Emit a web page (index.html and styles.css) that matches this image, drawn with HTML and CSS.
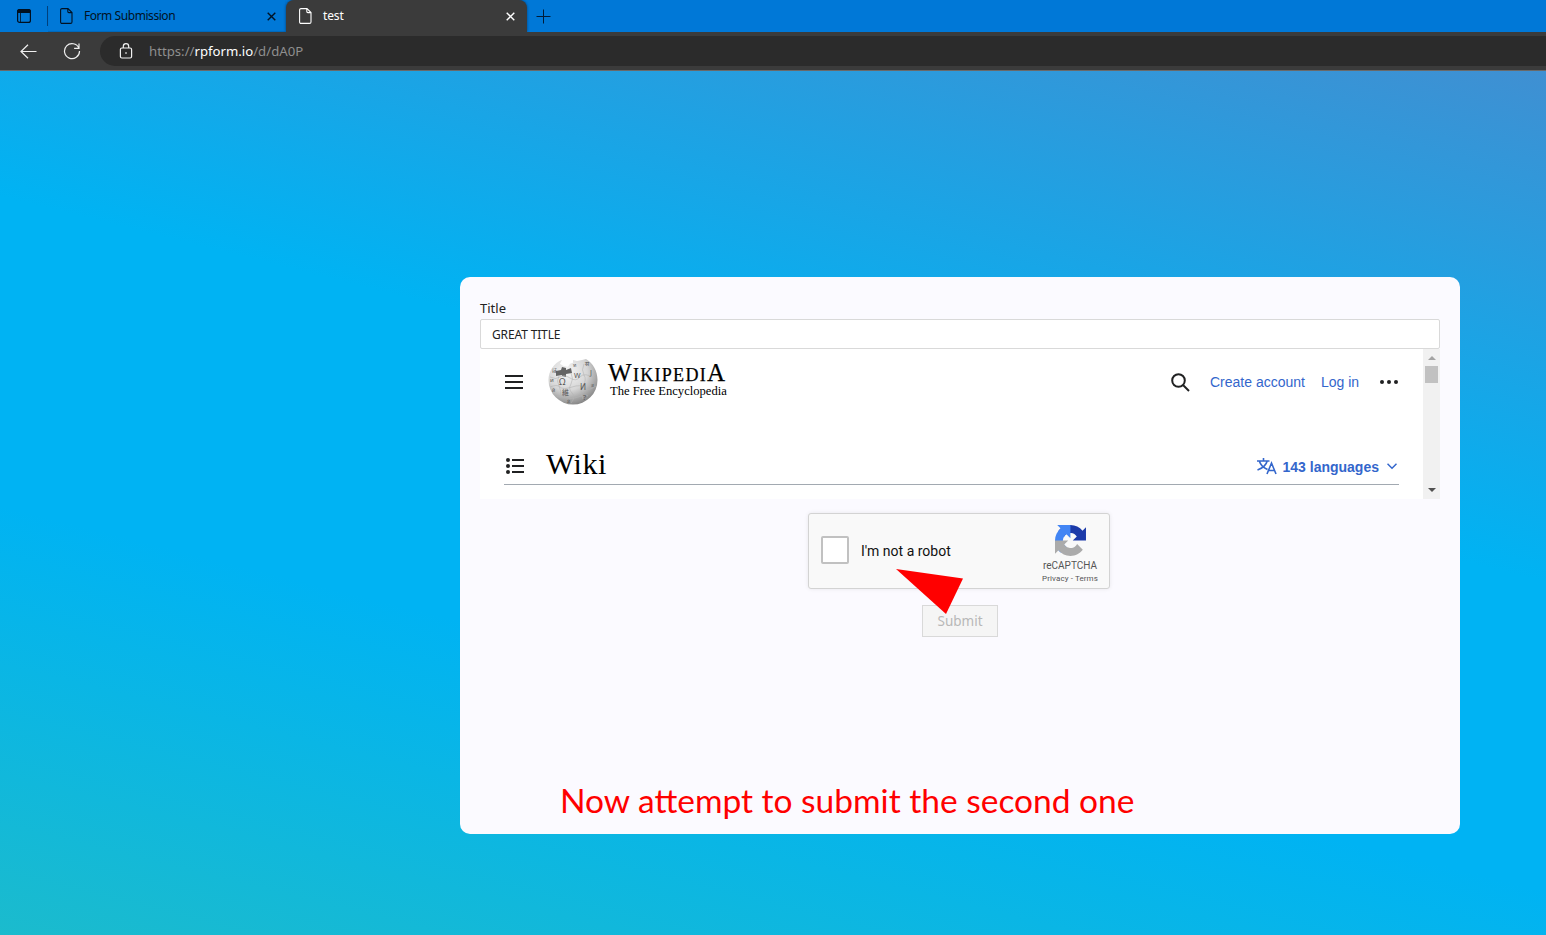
FILE: index.html
```html
<!DOCTYPE html>
<html lang="en">
<head>
<meta charset="utf-8">
<title>test</title>
<link rel="stylesheet" href="styles.css">
</head>
<body>
<header class="tabs">
  <svg class="workspace" width="16" height="16" viewBox="0 0 16 16"><rect x="1.600" y="1.600" width="12.800" height="12.800" rx="2" fill="none" stroke="#001020" stroke-width="1.200"/><path d="M1 5V3.500a2.500 2.500 0 0 1 2.500-2.500h9a2.500 2.500 0 0 1 2.500 2.500V5z" fill="#001020"/><path d="M4.500 5v9" stroke="#001020" stroke-width=".8"/></svg>
  <span class="divider"></span>
  <div class="tab first">
    <svg width="13" height="16" viewBox="0 0 13 16" fill="none" stroke="#001224" stroke-width="1.100"><path d="M2 .6h6l4 4v9.300a1.500 1.500 0 0 1-1.500 1.500h-8.500A1.400 1.400 0 0 1 .6 14V2A1.400 1.400 0 0 1 2 .6zM7.800.6v3a1 1 0 0 0 1 1H12"/></svg>
    <span class="label">Form Submission</span>
    <svg class="close" width="9" height="9" viewBox="0 0 9 9"><path d="M.7.700l7.600 7.600M8.300.7L.7 8.300" stroke="#001224" stroke-width="1.400"/></svg>
  </div>
  <div class="tab active">
    <svg width="13" height="16" viewBox="0 0 13 16" fill="none" stroke="#fff" stroke-width="1.100"><path d="M2 .6h6l4 4v9.300a1.500 1.500 0 0 1-1.500 1.500h-8.500A1.400 1.400 0 0 1 .6 14V2A1.400 1.400 0 0 1 2 .6zM7.800.6v3a1 1 0 0 0 1 1H12"/></svg>
    <span class="label">test</span>
    <svg class="close" width="9" height="9" viewBox="0 0 9 9"><path d="M.7.700l7.600 7.600M8.300.7L.7 8.300" stroke="#fff" stroke-width="1.400"/></svg>
  </div>
  <svg class="plus" width="15" height="15" viewBox="0 0 15 15"><path d="M7.500.5v14M.5 7.500h14" stroke="#001c38"/></svg>
</header>
<div class="toolbar">
  <svg class="back" width="17" height="15" viewBox="0 0 17 15" fill="none" stroke="#f0f0f0" stroke-width="1.200"><path d="M16.500 7.500H1M8 .7L1 7.500l7 6.800"/></svg>
  <svg class="reload" width="18" height="18" viewBox="0 0 18 18" fill="none" stroke="#f0f0f0" stroke-width="1.200"><path d="M15.900 6.200A7.500 7.500 0 1 0 16.500 9M16 1.500v4.900h-4.900"/></svg>
  <div class="address">
    <svg width="14" height="17" viewBox="0 0 14 17" fill="none" stroke="#f0f0f0" stroke-width="1.200"><rect x="1.400" y="5" width="11.200" height="10" rx="1.500"/><path d="M4.300 5V3.400a2.700 2.700 0 0 1 5.400 0V5"/><rect x="6.300" y="9.300" width="1.400" height="1.400" fill="#fff" stroke="none"/></svg>
    <span class="url">https://<b>rpform.io</b>/d/dA0P</span>
  </div>
</div>
<main class="page">
  <section class="card">
    <label class="field-label">Title</label>
    <div class="input">GREAT TITLE</div>
    <div class="frame">
      <div class="wiki">
        <div class="wiki-top">
          <svg width="18" height="14" viewBox="0 0 18 14"><path d="M0 1h18M0 7h18M0 13h18" stroke="#202122" stroke-width="2"/></svg>
          <svg class="globe" width="50" height="46" viewBox="0 0 50 46">
            <defs><radialGradient id="g" cx=".38" cy=".28" r=".75"><stop offset="0" stop-color="#f6f6f6"/><stop offset=".55" stop-color="#d6d6d6"/><stop offset="1" stop-color="#858585"/></radialGradient></defs>
            <path d="M14 .8l-2 4 3 2 5 1 2-3 3-1V1l4 1 5-1 4-1C45 4 49.500 12 49.500 21A24.500 24.500 0 0 1 .5 21C.5 12 6 4 14 .8z" fill="url(#g)"/>
            <path d="M8 12l5-1 1-3 4 1v2l5-2 1 5-6 1v3l-4-1v-1l-6 1z" fill="#646464"/>
            <g fill="none" stroke="#b4b4b4" stroke-width=".6"><path d="M2 18q6 3 10 0t10 1 10-1 15 1M2 28q7-3 10 0t12 0 12 1 12-2M8 38q6-3 10 0t12 0 10-1M11 17q-3 5 0 10t1 12M23 14q3 6 0 11t1 9-1 10M36 5q-3 6 0 11t-1 10 0 14"/></g>
            <g class="glyphs"><text x="11" y="26" font-size="9">Ω</text><text x="26" y="19" font-size="7">W</text><text x="32" y="31" font-size="8">И</text><text x="14" y="36" font-size="7">維</text><text x="42" y="16" font-size="7">J</text><text x="35" y="41" font-size="7">?</text><text x="2" y="23" font-size="6">и</text><text x="25" y="8" font-size="5">ท</text><text x="37" y="7" font-size="6">स</text><text x="4" y="13" font-size="5">ほ</text><text x="19" y="44" font-size="5">ន</text><text x="43" y="28" font-size="5">उ</text><text x="4" y="33" font-size="5">й</text></g>
          </svg>
          <div class="wordmark"><span class="name"><i>W</i>ikipedi<i>A</i></span><span class="tagline">The Free Encyclopedia</span></div>
          <svg class="search" width="19" height="19" viewBox="0 0 19 19" fill="none" stroke="#202122" stroke-width="2"><circle cx="7.500" cy="7.500" r="6.300"/><path d="M12 12l6 6"/></svg>
          <a class="create">Create account</a>
          <a class="login">Log in</a>
          <svg class="dots" width="18" height="4" viewBox="0 0 18 4" fill="#202122"><circle cx="2" cy="2" r="2"/><circle cx="9" cy="2" r="2"/><circle cx="16" cy="2" r="2"/></svg>
        </div>
        <div class="wiki-title">
          <svg class="list" width="18" height="16" viewBox="0 0 18 16"><path d="M6 2h12M6 8h12M6 14h12" stroke="#202122" stroke-width="2"/><circle cx="2" cy="2" r="2"/><circle cx="2" cy="8" r="2"/><circle cx="2" cy="14" r="2"/></svg>
          <h1>Wiki</h1>
          <svg class="translate" width="20" height="17" viewBox="0 0 20 17" fill="none" stroke="#3366cc" stroke-width="1.600"><path d="M0 3h12.500M6.500 0v3M2.500 3.500q1.500 5 8 8M10.200 3q-1.500 6-9.700 9M10 16l4.500-11L19 16M11.500 12.500h6"/></svg>
          <b class="languages">143 languages</b>
          <svg class="chevron" width="10" height="7" viewBox="0 0 10 7" fill="none" stroke="#3366cc" stroke-width="1.500"><path d="M.5.800L5 5.300 9.500.8"/></svg>
        </div>
      </div>
      <div class="scrollbar"><i class="up"></i><i class="thumb"></i><i class="down"></i></div>
    </div>
    <div class="captcha">
      <span class="check"></span>
      <span class="robot">I'm not a robot</span>
      <div class="brand">
        <svg width="31" height="31" viewBox="0 0 64 64"><path fill="#1c3aa9" d="M64 31.955l-.033-1.370V4.687l-7.160 7.160C50.948 4.674 42.033.093 32.050.093c-10.400 0-19.622 4.960-25.458 12.640l11.736 11.860a15.550 15.550 0 0 1 4.754-5.334c2.050-1.600 4.952-2.906 8.968-2.906.485 0 .86.057 1.135.163 4.976.393 9.288 3.140 11.828 7.124l-8.307 8.307z"/><path fill="#4285f4" d="M31.862.094l-1.370.033H4.594l7.160 7.160C4.580 13.147 0 22.060 0 32.046c0 10.400 4.960 19.622 12.640 25.458L24.500 45.768a15.550 15.550 0 0 1-5.334-4.754c-1.600-2.050-2.906-4.952-2.906-8.968 0-.485.057-.86.163-1.135.393-4.976 3.140-9.288 7.124-11.828l8.307 8.307z"/><path fill="#ababab" d="M.001 32.045l.033 1.370v25.898l7.160-7.160c5.860 7.173 14.774 11.754 24.760 11.754 10.400 0 19.622-4.960 25.458-12.640l-11.736-11.860a15.550 15.550 0 0 1-4.754 5.334c-2.050 1.600-4.952 2.906-8.968 2.906-.485 0-.86-.057-1.135-.163-4.976-.393-9.288-3.140-11.828-7.124l8.307-8.307z"/></svg>
        <span class="brand-name">reCAPTCHA</span>
        <span class="terms">Privacy - Terms</span>
      </div>
    </div>
    <div class="submit">Submit</div>
    <p class="note">Now attempt to submit the second one</p>
    <svg class="pointer" width="68" height="46" viewBox="0 0 68 46"><path d="M0 0l67 9.500L50 45z" fill="#f00"/></svg>
  </section>
</main>
</body>
</html>
```
FILE: styles.css
```css
* { box-sizing: border-box; }
body { margin: 0; width: 1546px; height: 935px; overflow: hidden; font-family: "Noto Sans", sans-serif; }
svg { display: block; flex: none; }
span, a, b { white-space: nowrap; }
.tabs { height: 32px; background: #0078d7; display: flex; align-items: center; }
.workspace { margin-left: 16px; }
.divider { width: 1px; height: 20px; background: #00407c; margin-left: 15px; }
.tab { height: 32px; display: flex; align-items: center; font-size: 12px; }
.first { width: 238px; padding: 0 10px 0 12px; color: #001224; box-shadow: inset 0 -1px 1px #0068ba; }
.tab .label { margin-left: 11px; line-height: 16px; letter-spacing: -.12px; }
.first .label { letter-spacing: -.44px; }
.close { margin-left: auto; }
.active { width: 241px; background: #3b3b3b; color: #fff; border-radius: 8px 8px 0 0; padding: 0 12px 0 13px; box-shadow: 0 0 3px #003f75; }
.plus { margin-left: 9px; }
.toolbar { position: relative; height: 39px; background: #3b3b3b; border-bottom: 1px solid #696969; display: flex; align-items: center; }
.back { margin-left: 19.5px; }
.reload { margin-left: 26.5px; }
.address { margin-left: 19px; flex: 1; height: 30px; border-radius: 15px 0 0 15px; background: #2b2b2b; display: flex; align-items: center; padding-left: 19px; }
.url { margin-left: 16px; color: #8f8f8f; font-size: 13.2px; }
.url b { color: #fff; font-weight: 400; }
.page { height: 864px; padding: 206px 0 0 460px; background: linear-gradient(14deg, #1bbbcd 0%, #00b3f3 32%, #00b3f3 55%, #4b89cc 100%) 0 0 / 1920px 864px; }
.card { position: relative; width: 1000px; height: 557px; background: #fbfaff; border-radius: 10px; padding: 20px; display: flex; flex-direction: column; align-items: center; }
.card > * { flex: none; }
.field-label { align-self: flex-start; font-size: 13px; line-height: 22px; color: #222; }
.input { width: 960px; height: 30px; border: 1px solid #d9d9d9; background: #fff; border-radius: 2px; padding-left: 11px; line-height: 29px; font-size: 12px; letter-spacing: -.14px; color: #222; }
.frame { width: 960px; height: 150px; display: flex; background: #fff; }
.wiki { width: 943px; padding: 0 24px; }
.wiki-top { height: 66px; display: flex; align-items: center; padding-left: 1px; font: 14px/20px "Liberation Sans", sans-serif; color: #3366cc; }
.globe { margin-left: 25px; }
.glyphs { fill: #555; font-family: "Noto Sans", "Noto Sans CJK JP", sans-serif; }
.wordmark { margin: -4px 0 0 10px; width: 120px; display: flex; flex-direction: column; font-family: "Liberation Serif", serif; color: #000; }
.name { font-size: 26px; line-height: 22px; font-variant: small-caps; letter-spacing: 1.3px; -webkit-text-stroke: .25px #000; }
.name i { font-style: normal; font-size: 25px; }
.tagline { font-size: 12.6px; line-height: 14px; padding-left: 2px; }
.search { margin-left: 443px; }
.create { margin-left: 20px; }
.login { margin-left: 16px; }
.dots { margin-left: auto; margin-right: 1px; }
.wiki-title { margin-top: 32px; height: 38px; border-bottom: 1px solid #a2a9b1; display: flex; align-items: center; padding-left: 2px; }
.list { fill: #202122; }
h1 { margin: -4px 0 0 22px; font: 400 30px/36px "Liberation Serif", serif; letter-spacing: .5px; color: #000; }
.translate { margin: 2px 0 0 auto; }
.languages { margin: 2px 0 0 6px; font: 700 14px/20px "Liberation Sans", sans-serif; color: #3366cc; }
.chevron { margin: 1px 2px 0 8px; }
.scrollbar { width: 17px; background: #f1f1f1; display: flex; flex-direction: column; align-items: center; }
.up, .down { border: 4px solid transparent; border-top: 0; border-bottom: 4px solid #a3a3a3; margin-top: 7px; }
.thumb { width: 13px; height: 17px; background: #c1c1c1; margin-top: 6px; }
.down { border-bottom: 0; border-top: 4px solid #505050; margin: auto 0 7px; }
.captcha { width: 302px; height: 76px; margin: 14px 2px 0 0; background: #f9f9f9; border: 1px solid #d3d3d3; border-radius: 3px; box-shadow: 0 0 4px rgba(0,0,0,.08); display: flex; align-items: center; padding-left: 12px; font-family: Roboto, sans-serif; }
.check { width: 28px; height: 28px; border: 2px solid #c1c1c1; border-radius: 2px; background: #fff; margin-top: -2px; }
.robot { margin-left: 12px; font-size: 14px; color: #111; }
.brand { margin: 7px 7px 0 auto; width: 64px; display: flex; flex-direction: column; align-items: center; color: #555; }
.brand-name { font-size: 10px; line-height: 12px; margin-top: 4px; }
.terms { font-size: 8px; line-height: 12px; margin-top: 1px; letter-spacing: .1px; }
.submit { width: 76px; height: 32px; margin-top: 16px; border: 1px solid #d9d9d9; background: #f5f5f5; color: #b8b8b8; font-size: 13.5px; line-height: 30px; text-align: center; }
.note { margin: 139px 0 0; align-self: flex-start; padding-left: 80px; white-space: nowrap; color: #f00; font: 33.5px/48px Lato, sans-serif; }
.pointer { position: absolute; left: 436px; top: 292px; }
```
